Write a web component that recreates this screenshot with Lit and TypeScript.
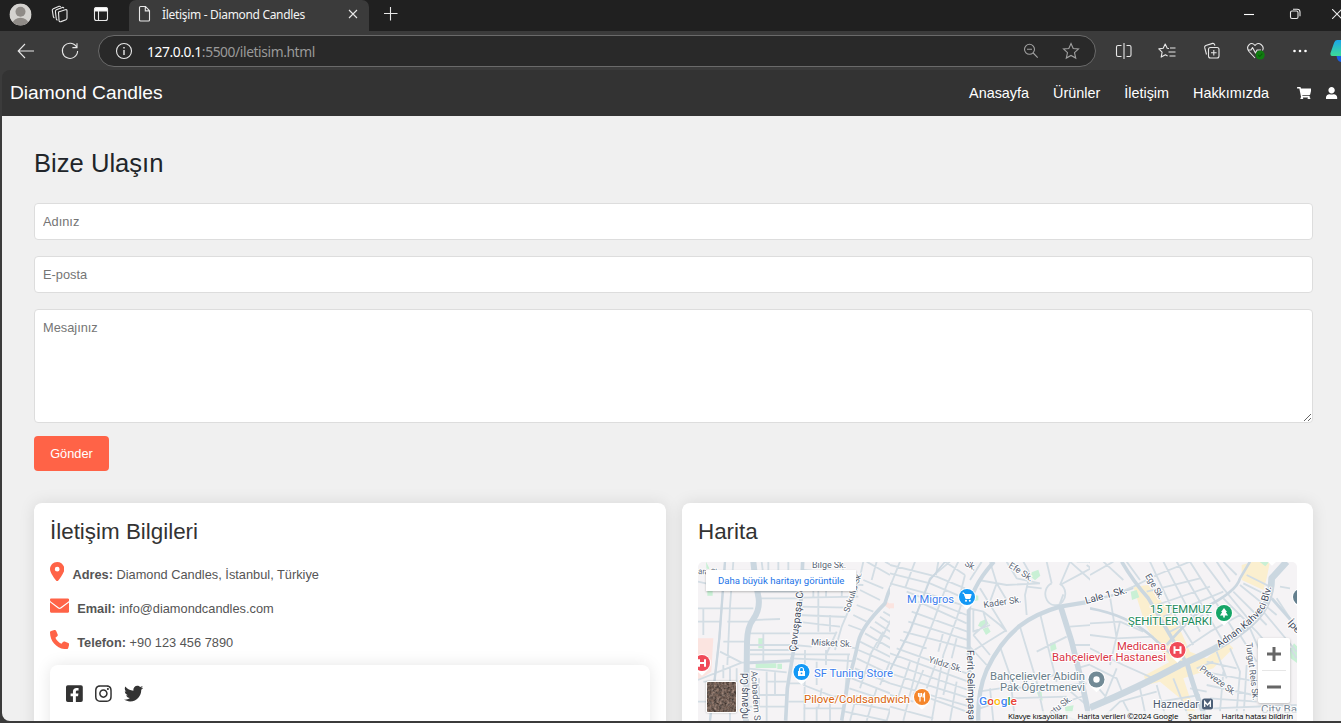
import { LitElement, html, css, svg } from "lit";
import { customElement } from "lit/decorators.js";

const SANS = css`"Liberation Sans", Arial, sans-serif`;

/* Solid glyphs: [viewBox width, path] on a 512 high grid */
const GLYPHS: Record<string, [number, string]> = {
  cart: [576, "M528.12 301.319l47.273-208C578.806 78.301 567.391 64 551.99 64H159.208l-9.166-44.81C147.758 8.021 137.93 0 126.529 0H24C10.745 0 0 10.745 0 24v16c0 13.255 10.745 24 24 24h69.883l70.248 343.435C147.325 417.1 136 435.222 136 456c0 30.928 25.072 56 56 56s56-25.072 56-56c0-15.674-6.447-29.835-16.824-40h209.647C430.447 426.165 424 440.326 424 456c0 30.928 25.072 56 56 56s56-25.072 56-56c0-22.172-12.888-41.332-31.579-50.405l5.517-24.276c3.413-15.018-8.002-29.319-23.403-29.319H218.117l-6.545-32h293.145c11.206 0 20.92-7.754 23.403-18.681z"],
  user: [448, "M224 256c70.7 0 128-57.3 128-128S294.7 0 224 0 96 57.3 96 128s57.3 128 128 128zm89.6 32h-16.7c-22.2 10.2-46.9 16-72.9 16s-50.6-5.8-72.9-16h-16.7C60.2 288 0 348.2 0 422.4V464c0 26.5 21.5 48 48 48h352c26.5 0 48-21.5 48-48v-41.6c0-74.2-60.2-134.4-134.4-134.4z"],
  pin: [384, "M215.7 499.2C267 435 384 279.4 384 192C384 86 298 0 192 0S0 86 0 192c0 87.4 117 243 168.3 307.2c12.3 15.3 35.1 15.3 47.4 0zM192 128a64 64 0 1 1 0 128 64 64 0 1 1 0-128z"],
  mail: [512, "M36 64C14 64 0 78 0 100c0 19 7.100 37 19.200 46.400L236.800 309.600c11.400 8.500 27 8.500 38.400 0L492.800 146.400c12.100-9.100 19.200-27 19.200-46.400c0-22-14-36-36-36H36zM0 170V408c0 24 16 40 40 40H472c24 0 40-16 40-40V170L294.400 335.200c-22.800 17.100-54 17.100-76.800 0L0 170z"],
  phone: [512, "M164.9 24.6c-7.7-18.6-28-28.5-47.4-23.2l-88 24C12.1 30.2 0 46 0 64C0 311.4 200.6 512 448 512c18 0 33.8-12.1 38.6-29.5l24-88c5.3-19.4-4.6-39.7-23.2-47.4l-96-40c-16.3-6.8-35.2-2.1-46.3 11.6L304.7 368C234.3 334.7 177.3 277.7 144 207.3L193.3 167c13.7-11.2 18.4-30 11.6-46.3l-40-96z"],
  facebook: [448, "M400 32H48A48 48 0 0 0 0 80v352a48 48 0 0 0 48 48h137.25V327.69h-63V256h63v-54.64c0-62.15 37-96.48 93.67-96.48 27.14 0 55.52 4.84 55.52 4.84v61h-31.27c-30.81 0-40.42 19.12-40.42 38.73V256h68.78l-11 71.69h-57.78V480H400a48 48 0 0 0 48-48V80a48 48 0 0 0-48-48z"],
  instagram: [448, "M224.1 141c-63.6 0-114.9 51.3-114.9 114.9s51.3 114.9 114.9 114.9S339 319.5 339 255.9 287.7 141 224.1 141zm0 189.6c-41.1 0-74.7-33.5-74.7-74.7s33.5-74.7 74.7-74.7 74.7 33.5 74.7 74.7-33.6 74.7-74.7 74.7zm146.4-194.3c0 14.9-12 26.8-26.8 26.8-14.9 0-26.8-12-26.8-26.8s12-26.8 26.8-26.8 26.8 12 26.8 26.8zm76.1 27.2c-1.7-35.9-9.9-67.7-36.2-93.9-26.2-26.2-58-34.4-93.9-36.2-37-2.1-147.9-2.1-184.9 0-35.8 1.7-67.6 9.9-93.9 36.1s-34.4 58-36.2 93.9c-2.1 37-2.1 147.9 0 184.9 1.7 35.9 9.9 67.7 36.2 93.9s58 34.4 93.9 36.2c37 2.1 147.9 2.1 184.9 0 35.9-1.7 67.7-9.9 93.9-36.2 26.2-26.2 34.4-58 36.2-93.9 2.1-37 2.1-147.8 0-184.8zM398.8 388c-7.8 19.6-22.9 34.7-42.6 42.6-29.5 11.7-99.5 9-132.1 9s-102.7 2.6-132.1-9c-19.6-7.8-34.7-22.9-42.6-42.6-11.7-29.5-9-99.5-9-132.1s-2.6-102.7 9-132.1c7.8-19.6 22.9-34.7 42.6-42.6 29.5-11.7 99.5-9 132.1-9s102.7-2.6 132.1 9c19.6 7.8 34.7 22.9 42.6 42.6 11.7 29.5 9 99.5 9 132.1s2.7 102.7-9 132.1z"],
  twitter: [512, "M459.37 151.716c.325 4.548.325 9.097.325 13.645 0 138.72-105.583 298.558-298.558 298.558-59.452 0-114.68-17.219-161.137-47.106 8.447.974 16.568 1.299 25.34 1.299 49.055 0 94.213-16.568 130.274-44.832-46.132-.975-84.792-31.188-98.112-72.772 6.498.974 12.995 1.624 19.818 1.624 9.421 0 18.843-1.3 27.614-3.573-48.081-9.747-84.143-51.98-84.143-102.985v-1.299c13.969 7.797 30.214 12.67 47.431 13.319-28.264-18.843-46.781-51.005-46.781-87.391 0-19.492 5.197-37.36 14.294-52.954 51.655 63.675 129.3 105.258 216.365 109.807-1.624-7.797-2.599-15.918-2.599-24.04 0-57.828 46.782-104.934 104.934-104.934 30.213 0 57.502 12.67 76.67 33.137 23.715-4.548 46.456-13.32 66.599-25.34-7.798 24.366-24.366 44.833-46.132 57.827 21.117-2.273 41.584-8.122 60.426-16.243-14.292 20.791-32.161 39.308-52.628 54.253z"],
};

const glyph = (name: string, size: number) => {
  const [w, d] = GLYPHS[name];
  return html`<svg viewBox="0 0 ${w} 512" width=${(w / 512) * size} height=${size} fill="currentColor"><path d=${d}></path></svg>`;
};

@customElement("browser-chrome")
class BrowserChrome extends LitElement {
  static styles = css`
    :host { display: block; font-family: "Noto Sans", "Open Sans", sans-serif; color: #fff; }
    svg { display: block; flex: none; fill: none; stroke: #e8e8e8; stroke-width: 1.1; }
    .tabs { display: flex; height: 31px; background: #202020; }
    .left { display: flex; align-items: center; width: 129px; height: 28px; padding-left: 9px; gap: 18px; box-sizing: border-box; background: #202020; }
    .panel { margin-left: 4px; }
    .tab { display: flex; align-items: center; width: 240px; height: 31px; background: #3b3b3b; border-radius: 7px 7px 0 0; padding: 0 9px 3px 8px; box-sizing: border-box; }
    .title { flex: 1; margin-left: 9px; font-size: 12px; letter-spacing: -0.32px; white-space: nowrap; color: #f4f4f4; }
    .plus { margin: 6px 0 0 14px; }
    .controls { display: flex; margin-left: auto; width: 97px; height: 28px; align-items: center; gap: 33px; overflow: hidden; }
    .restore { margin-left: 1px; }
    .close { margin-left: -4px; }
    .bar { display: flex; align-items: center; height: 39px; background: #3b3b3b; overflow: hidden; }
    .back { margin-left: 17px; }
    .reload { margin-left: 26px; }
    .address { display: flex; flex: none; align-items: center; box-sizing: border-box; width: 998px; height: 32px; margin: 1px 0 0 19px; padding: 0 15px 0 16px; border: 1px solid #6a6a6a; border-radius: 16px; background: #292929; }
    .url { flex: 1; margin-left: 14px; font-size: 13.8px; letter-spacing: -0.4px; color: #9a9a9a; white-space: nowrap; }
    .url b { font-weight: 400; color: #fff; }
    .address .dim { stroke: #a0a0a0; }
    .star { margin-left: 23px; }
    .tools { display: flex; flex: none; align-items: center; gap: 24px; margin-left: 19px; }
    .favs { margin-left: 1px; }
    .pilot { margin-left: -5px; }
  `;

  render() {
    return html`
      <div class="tabs">
        <div class="left">
          <svg width="23" height="23" viewBox="0 0 23 23">
            <defs><clipPath id="face"><circle cx="11.5" cy="11.5" r="11"></circle></clipPath></defs>
            <g stroke="none" clip-path="url(#face)"><circle cx="11.5" cy="11.5" r="11.2" fill="#d4d2cf"></circle><circle cx="11.5" cy="8.8" r="5" fill="#8f8b87"></circle><ellipse cx="11.5" cy="20.5" rx="7.8" ry="5.7" fill="#8f8b87"></ellipse></g>
          </svg>
          <svg width="20" height="20" viewBox="0 0 20 20">
            <path d="M8.5 8.1l6.8-2.4q1.7-.4 1.7 1.2v7.2q0 1.2-1 1.6l-5 1.9q-2 .5-2-1.4z"></path>
            <path d="M6.2 14.2l-.8-6.6q-.1-1.3 1-1.8l6-2.4q1-.3 1.5.8M3.3 12.3l-1-5.8q-.2-1.2 1-1.7l5.8-2.5q1-.3 1.6.6M6.2 14.4q.2 1.4 1.3 1.8M3.3 12.4q.2 1.1 1.1 1.5"></path>
          </svg>
          <svg class="panel" width="18" height="18" viewBox="0 0 18 18">
            <rect x="2.5" y="2.5" width="13" height="13" rx="2"></rect><path d="M2.5 6V4.5a2 2 0 0 1 2-2h9a2 2 0 0 1 2 2V6z" fill="#fff"></path><path d="M6.5 6v9.5"></path>
          </svg>
        </div>
        <div class="tab">
          <svg width="16" height="18" viewBox="0 0 16 18"><path d="M3.5 1.5h5l4 4.2v9.3q0 1-1 1h-8q-1 0-1-1v-12.5q0-1 1-1zM8.3 1.7v4.2h4.2"></path></svg>
          <span class="title">İletişim - Diamond Candles</span>
          <svg width="14" height="14" viewBox="0 0 14 14"><path d="M3 3l8 8M11 3l-8 8"></path></svg>
        </div>
        <svg class="plus" width="16" height="16" viewBox="0 0 16 16"><path d="M7.5 1v13.5M1 7.5h13.5"></path></svg>
        <div class="controls">
          <svg width="10" height="10" viewBox="0 0 10 10"><path d="M0 5.5h10" stroke="#fff"></path></svg>
          <svg class="restore" width="15" height="12" viewBox="0 0 15 12"><rect x="2.5" y="3" width="7.5" height="7.5" rx="1.5"></rect><path d="M5 1.2h4.2q2.8 0 2.8 2.8v4.2"></path></svg>
          <svg class="close" width="10" height="10" viewBox="0 0 10 10"><path d="M0 0l10 10M10 0L0 10"></path></svg>
        </div>
      </div>
      <div class="bar">
        <svg class="back" width="18" height="18" viewBox="0 0 18 18"><path d="M17 9H1.4M8 2L1.2 9 8 16"></path></svg>
        <svg class="reload" width="18" height="18" viewBox="0 0 18 18"><path d="M15.7 5.2A7.6 7.6 0 1 0 16.6 9M16 1.2v4.4h-4.6"></path></svg>
        <div class="address">
          <svg width="18" height="18" viewBox="0 0 18 18"><circle cx="9" cy="9" r="7.5"></circle><path d="M9 8v5M9 5v1.4" stroke-width="1.4"></path></svg>
          <span class="url"><b>127.0.0.1</b>:5500/iletisim.html</span>
          <svg class="dim" width="16" height="16" viewBox="0 0 16 16"><circle cx="6.5" cy="6.3" r="5"></circle><path d="M10.2 10l4.5 4.7M4 6.3h5"></path></svg>
          <svg class="dim star" width="18" height="18" viewBox="0 0 18 18"><path d="M9 1.5l2.2 5 5.3.5-4 3.7 1.2 5.4L9 13.4l-4.7 2.7 1.2-5.4-4-3.7 5.3-.5z"></path></svg>
        </div>
        <div class="tools">
          <svg width="18" height="18" viewBox="0 0 18 18"><path d="M9 1v16M6.5 3.5h-3.500q-1.500 0-1.500 1.500v8q0 1.500 1.500 1.500h3.500M11.500 3.500h3q1.500 0 1.500 1.500v8q0 1.500-1.500 1.500h-3"></path></svg>
          <svg class="favs" width="20" height="18" viewBox="0 0 20 18"><path d="M11 6.500l-1.800-.2L7.200 2 5.200 6.300l-4.400.6 3.300 3.200-.9 5 4.200-2.300 2.200 1.200M12 6h5.500M10.500 10h7M11.500 14h6" stroke-linejoin="round"></path></svg>
          <svg width="20" height="20" viewBox="0 0 20 20"><rect x="6.500" y="6.500" width="10.500" height="10.500" rx="2"></rect><path d="M11.800 9v5.600M9 11.800h5.600M4.500 13.500L2.700 6.700q-.4-1.700 1.100-2.300l6.800-2q1.500-.3 2 1.200l.3 1"></path></svg>
          <svg width="20" height="20" viewBox="0 0 20 20"><path d="M9 17L3 10.500C-1 5 5.500-.5 9 4.500c3.500-5 10 .5 7.500 5M2 9h3l1.500-2.500 3 5.500L11 9h4" stroke-linejoin="round"></path><circle cx="14.200" cy="14" r="4.500" fill="#107c10" stroke="none"></circle><path d="M12.200 14l1.500 1.500 2.600-2.800" stroke="#0a5c0a"></path></svg>
          <svg width="20" height="20" viewBox="0 0 20 20"><g fill="#fff" stroke="none"><circle cx="4.500" cy="10" r="1.300"></circle><circle cx="10" cy="10" r="1.300"></circle><circle cx="15.500" cy="10" r="1.300"></circle></g></svg>
          <svg class="pilot" width="24" height="24" viewBox="0 0 24 24"><defs><linearGradient id="cp" x1="0" y1="0" x2="0" y2="1"><stop offset="0" stop-color="#1aa5ea"></stop><stop offset="1" stop-color="#3ddc97"></stop></linearGradient></defs><g stroke="none"><path d="M7 15h8v8h-2q-4 0-5-4z" fill="#1a5fe0"></path><path d="M8 1h12v16H3q-2 0-1.500-3L5 4q1-3 3-3z" fill="url(#cp)"></path></g></svg>
        </div>
      </div>
    `;
  }
}

@customElement("site-header")
class SiteHeader extends LitElement {
  static styles = css`
    :host { display: flex; align-items: center; box-sizing: border-box; height: 46px; padding-left: 8px; background: #333; color: #fff; font-family: ${SANS}; overflow: hidden; }
    .brand { font-size: 19.2px; line-height: 24px; }
    nav { display: flex; flex: none; align-items: center; gap: 24px; margin-left: auto; font-size: 14.4px; line-height: 18px; }
    .icons { display: flex; gap: 15px; margin-left: 4px; width: 44px; overflow: hidden; }
    svg { display: block; flex: none; }
  `;
  render() {
    return html`
      <div class="brand">Diamond Candles</div>
      <nav>
        <span>Anasayfa</span><span>Ürünler</span><span>İletişim</span><span>Hakkımızda</span>
        <div class="icons">${glyph("cart", 12.8)} ${glyph("user", 12.8)}</div>
      </nav>
    `;
  }
}

/* Street network, three panels drawn on a triple-resolution grid */
const PANELS = [
  {
    x: 690,
    blocks: [
      ["#fbe4e0", "M24 250h46l-6 100-40 25zM590 140l25 15-8 12-22-14z"],
      ["#c9f0d5", "M205 250h14v30h-14zM197 325h62v14h-62zM48 20l10 20-8 10zM52 108h16v14H52zM262 326h14v16h-14z"],
    ],
    minor: "M105 20L88 250 60 497M24 160H190M24 200H90M40 160V240M24 80L90 95M130 20L120 155 112 330M112 200H180M100 260H170M24 375L155 323 310 317M155 323L90 290M100 330V370M180 235H300M215 20L220 60M205 110H330M210 130H335M235 20V110M265 20V110M295 20V110M190 195L270 192M220 235V318M180 270H300M180 285H300M180 298H480M170 340L290 352M190 420H290M230 380H290M230 350V497M255 352V420M178 455H290M207 370V455M120 340V497M24 440H120M140 340V380M75 380H40M340 45L500 60M340 85L520 90M338 128L505 125M330 155L470 158M325 180L470 186M320 200L450 215M315 235H440M310 270L365 275M485 278L500 280M300 310L490 318M345 285L343 497M380 320V390M408 285V330M440 230L408 300M475 300L465 420M340 390L430 425 470 420M300 385H340M295 440H345M340 460H460M380 455V497M420 440V497M395 400L385 460M520 20L500 110 455 215 435 285M410 20L408 125M370 45V125M460 20L455 125M385 85V230M420 180V230M520 75L580 100M510 105L570 135M500 150L550 170M490 180L530 200M475 210L515 225M530 20L600 60M560 20L545 75M585 20L620 40M580 170L630 200M570 185L630 225M555 200L630 250M540 215L630 270M525 235L630 295M510 260L630 320M505 285L600 325M500 310L630 372M495 340L600 385M485 370L600 415M478 400L600 440M470 440L600 465M465 470L590 497M610 180L560 280M580 230L540 300M600 320L570 390M545 290L510 400M560 400L530 497M500 420L480 497M620 400L590 497",
    major: [
      ["M190 20Q196 80 206 130 210 165 190 192 172 215 171 260L168 497", 18],
      ["M338 20L333 140 310 290 292 400 287 497", 11],
      ["M630 50Q600 90 585 145 515 215 505 260 490 330 475 375L455 497", 11],
      ["M105 20L88 250 60 497", 7],
      ["M168 324L300 317", 9],
    ],
  },
  {
    x: 890,
    blocks: [
      ["#c9f0d5", "M270 200l18-8 8 14-18 14-14-8zM278 222l16-6 8 14-14 10zM425 52l20-8 6 18-16 14-12-10zM480 265l15-5 5 22-18 8zM440 385l14 20 4 32-12-10-10-30zM525 455l26-4-4 20-20 5zM255 120l10 2v14l-10 2z"],
      ["#fbe4e0", "M0 145h12v15H0z"],
    ],
    minor: "M180 20L120 70 60 230 0 345M30 20L0 95M75 20L45 100M145 20L138 60M205 20L170 90 130 200 90 300 40 497M225 115L200 190 160 300 125 497M225 60L210 120M0 30L140 65 225 100M0 55L120 85 225 130M0 85L110 115 230 155M50 110L230 180M85 140L230 205M65 170L232 230M55 200L232 255M40 230L232 280M30 255L110 280M20 280L230 355M0 295L235 380M0 325L235 405M0 355L240 430M0 385L240 455M0 420L70 440M120 430L245 475M0 455L130 490M165 20L225 60M160 230L145 290M200 250L185 310M60 320L20 440M100 345L70 420M180 330L160 420M200 380L180 497M140 320L110 400M275 20L240 75M265 75L350 90 450 85M300 20L320 85 300 140M320 85L350 135M350 20L380 70 450 85M400 20L420 55 405 120 410 180M470 20L485 85M540 20L510 90M540 20L630 100M510 90L575 55 630 25M485 85A30 34 0 1 0 512 88M510 145L520 118M560 20L600 20 630 80M455 100L410 95M240 160L280 170 330 210 350 230M250 165L250 230 300 210M280 170L290 205 250 240M250 240L300 300M245 290L310 250 350 225M235 270L290 330M270 100L350 230M390 215L440 380 465 497M450 175L480 300 500 380M440 290L530 245M540 215L630 208M550 270L630 270M420 370L500 360M440 400L590 385M330 275L360 360 375 497M265 410L330 400 470 395M270 460L330 440M300 400L310 497M350 430L530 425M470 497L530 440 590 420M560 340L630 320M590 30L630 60M530 400L590 450M490 470L560 497",
    major: [
      ["M312 20Q240 100 236 170L236 290 245 497", 12],
      ["M265 497Q262 410 290 345 330 260 390 212 440 175 510 155L630 135", 13],
      ["M512 155L545 260 575 380 600 497", 17],
      ["M165 20L120 75 60 225 0 345", 5],
    ],
  },
  {
    x: 1090,
    blocks: [
      ["#fbefcf", "M130 95l45-5 80 100 45 100 50 20 60-50 20 20-60 60-90 30 30 90 40 60h-30l-50-90-60-50-40 10-8-28 75-40-70-110zM455 30l35-10h50l-10 50-10 35-65-30z"],
      ["#c9f0d5", "M122 110l18-5 8 22-22 8zM600 285l12-20 10 10v50l-20-15zM508 20h30l-12 14z"],
    ],
    minor: "M0 60L70 20M40 20L100 75M0 135L60 125 130 95 200 60 300 20M110 20L150 75M0 205L90 200 160 230M0 240L80 250 190 245M60 125L80 250M0 280L100 330 190 370M90 200L60 330M0 330L80 370 100 420M0 370L60 440M40 440L80 340M100 420L200 370M30 497L90 440 200 410M150 400L170 497M200 390L230 497M100 440L130 497M180 20L260 190 310 270M220 20L330 230M260 20L400 260M300 20L440 240M340 20L400 100 490 210M380 20L420 80M170 110L330 70M200 150L360 95M220 185L400 110M240 230L340 180M270 290L360 230 450 180M400 130L500 230 560 300M450 90L560 180M430 110L530 210M400 20L440 60M470 60L540 95M460 85L530 120M420 280L450 350 440 470M380 290L410 370M350 320L440 340M340 350L500 380M350 390L490 420M400 350L390 470M450 240L500 320M480 220L510 290M360 430L500 440M370 460L620 450M470 330L460 497M560 130L620 220M570 95L600 100M520 170L620 290M600 280L620 310M610 450L590 497M320 340L370 320M300 400L350 410M250 370L300 497M210 440L330 420",
    major: [
      ["M95 20Q130 80 175 130L240 240 290 325", 11],
      ["M0 135Q80 120 130 100", 5],
      ["M0 160Q110 180 180 240L280 330", 8],
      ["M0 458Q140 400 270 330 340 300 390 272 480 220 515 170 545 125 545 70L590 20", 20],
      ["M290 320Q310 400 350 497", 15],
      ["M230 270Q300 190 340 160 440 110 450 70L480 20", 8],
      ["M545 130L620 215", 9],
    ],
  },
];

type Label = [string, number, number, number, string, string?, number?, number?];
/* text, x, y, size, colour, anchor, angle, drawn width */
const LABELS: Label[] = [
  ["Bilge Sk.", 812, 567.5, 8.5, "#5b6676", "start", 0, 34],
  ["ara Sk.", 698, 574, 8.5, "#5b6676", "start", 3, 23],
  ["Sokullu Sk.", 849, 613, 8.5, "#5b6676", "start", -72, 42],
  ["Çavuşpaşa Cd", 796, 652, 10, "#3f4b5e", "start", -83, 66],
  ["Misket Sk.", 811, 645, 9, "#5b6676", "start", 3, 41],
  ["Acıbadem Sok", 751, 671, 9, "#5b6676", "start", 86, 60],
  ["nÇavuş Cd", 748, 719, 10, "#3f4b5e", "start", -90, 46],
  ["SF Tuning Store", 814, 677, 11, "#3b7ded", "start", 0, 79],
  ["Pilove/Coldsandwich", 804, 703, 11, "#d9640d", "start", 0, 106],
  ["M Migros", 907, 603, 11, "#3b7ded", "start", 0, 47],
  ["Sk.", 964, 565, 9, "#5b6676", "start", 30, 12],
  ["Efe Sk.", 1008, 567, 9, "#5b6676", "start", 33, 27],
  ["Kader Sk.", 984, 608, 9, "#5b6676", "start", -9, 38],
  ["Yıldız Sk.", 928, 662, 9, "#5b6676", "start", 17, 35],
  ["Ferit Selimpaşa", 967, 650, 10, "#3f4b5e", "start", 89, 70],
  ["Lale 1 Sk.", 1086, 604, 10, "#3f4b5e", "start", -15, 43],
  ["Ege Sk.", 1145, 576, 9, "#5b6676", "start", 59, 28],
  ["15 TEMMUZ", 1212, 613, 10.5, "#1b8a5a", "end", 0, 62],
  ["ŞEHİTLER PARKI", 1212, 624.5, 10.5, "#1b8a5a", "end", 0, 84],
  ["Medicana", 1166, 650, 11, "#d93445", "end", 0, 49],
  ["Bahçelievler Hastanesi", 1166, 661, 11, "#d93445", "end", 0, 114],
  ["Bahçelievler Abidin", 1085, 680, 11, "#697d89", "end", 0, 95],
  ["Pak Öğretmenevi", 1085, 691, 11, "#697d89", "end", 0, 85],
  ["Adnan Kahveci", 1219, 648, 10, "#3f4b5e", "start", -36, 30],
  ["Turgut Reis Sk.", 1246, 643, 9, "#5b6676", "start", 83, 58],
  ["Preveze Sk.", 1199, 670, 9, "#5b6676", "start", 37, 43],
  ["İpek", 1287, 623, 9.5, "#3f4b5e", "start", 48, 20],
  ["Haznedar", 1153, 708, 10.5, "#4c5a6e", "start", 0, 46],
  ["City Ba", 1261, 713, 10.5, "#7c8b99", "start", 0, 36],
  ["ntu Sk.", 1052, 716, 9, "#5b6676", "start", -38, 26],
];

@customElement("street-map")
class StreetMap extends LitElement {
  static styles = css`
    :host { display: block; position: relative; height: 159px; border-radius: 5px 5px 0 0; overflow: hidden; background: #f5f3f5; }
    .canvas { display: block; font-family: Roboto, sans-serif; }
    .halo { paint-order: stroke; stroke: #fff; stroke-width: 2px; stroke-linejoin: round; }
    .bigger { position: absolute; left: 8px; top: 8px; box-sizing: border-box; width: 150px; height: 21px; padding-left: 12px; background: #fff; box-shadow: 0 1px 2px rgba(0, 0, 0, 0.25); color: #1a73e8; font: 9.6px/21px Roboto, sans-serif; white-space: nowrap; }
    .zoom { position: absolute; left: 560px; top: 76px; width: 32px; height: 65px; border-radius: 2px; background: #fff; box-shadow: 0 1px 3px rgba(0, 0, 0, 0.25); display: flex; flex-direction: column; align-items: center; justify-content: space-evenly; }
    .zoom svg { display: block; fill: #666; }
    .zoom i { width: 24px; height: 1px; background: #e6e6e6; }
    .credits { position: absolute; right: 0; bottom: 0; display: flex; gap: 10px; height: 10px; padding: 0 4px 0 3px; font: 8px/10px "Open Sans", sans-serif; letter-spacing: -0.19px; color: #000; background: rgba(245, 245, 245, 0.75); white-space: nowrap; }
    .thumb { position: absolute; left: 8px; top: 119px; width: 29px; height: 30px; border: 1px solid #fff; border-radius: 2px; overflow: hidden; box-shadow: 0 0 2px rgba(0, 0, 0, 0.3); }
    .thumb svg { display: block; }
  `;

  private marker(x: number, y: number, colour: string, inner: unknown) {
    return svg`<g transform="translate(${x} ${y})"><path d="M-6.5 6.5L0 12.8 6.5 6.5z" fill="#fff"></path><circle r="9" fill="#fff"></circle><circle r="8" fill=${colour}></circle>${inner}</g>`;
  }

  render() {
    const letterH = svg`<path d="M-3-3.8V3.8M3-3.8V3.8M-3 0H3" stroke="#fff" stroke-width="2"></path>`;
    return html`
      <svg class="canvas" width="599" height="159" viewBox="698 562 599 159">
        <defs>
          ${PANELS.map((p, i) => svg`<clipPath id=${"p" + i}><rect x="0" y="0" width=${i < 2 ? 600 : 640} height="510"></rect></clipPath>`)}
          <path id="boulevard" d="M1219 648Q1258 622 1266 606 1270 596 1272 583"></path>
        </defs>
        ${PANELS.map((p, i) => svg`<g transform="translate(${p.x} 555) scale(.33333)" clip-path=${`url(#p${i})`} fill="none" stroke="#d3dde4" stroke-linejoin="round">
          ${p.blocks.map(([c, d]) => svg`<path d=${d} fill=${c} stroke="none"></path>`)}
          <path d=${p.minor} stroke-width="5.5"></path>
          ${p.major.map(([d, w]) => svg`<path d=${d} stroke="#cbd7e0" stroke-width=${w}></path>`)}
        </g>`)}
        ${LABELS.filter((l) => l[0] !== "Adnan Kahveci").map(([t, x, y, s, c, a, r, w]) => svg`<text class="halo" transform="translate(${x} ${y}) rotate(${r ?? 0})" font-size=${s} fill=${c} text-anchor=${a ?? "start"} textLength=${w ?? 40} lengthAdjust="spacingAndGlyphs">${t}</text>`)}
        <text class="halo" font-size="10" fill="#3f4b5e" letter-spacing="-.05"><textPath href="#boulevard">Adnan Kahveci Blv.</textPath></text>
        ${this.marker(702, 663, "#f04a58", letterH)}
        ${this.marker(1177.5, 650, "#f04a58", letterH)}
        ${this.marker(801.5, 672, "#1398f5", svg`<path d="M-3.5-1h7v5h-7z" fill="#fff"></path><path d="M-2-1V-2.5a2 2 0 0 1 4 0V-1" fill="none" stroke="#fff" stroke-width="1.2"></path><circle cy="1.3" r=".9" fill="#1398f5"></circle>`)}
        ${this.marker(967, 597, "#1398f5", svg`<path d="M-4.5-4H-3L-1.200 1.500H3L4.200-2.500H-2.400" fill="#fff" stroke="#fff"></path><circle cx="-1" cy="3.7" r="1" fill="#fff"></circle><circle cx="2.8" cy="3.7" r="1" fill="#fff"></circle>`)}
        ${this.marker(922, 697, "#f5862b", svg`<path d="M-3.5-4v2.500q0 1.500 1.500 1.500T-.5-1.500V-4M-2-4V4.500M2.500 4.500V-4Q1-3 1 0h1.500" fill="none" stroke="#fff" stroke-width="1.2"></path>`)}
        ${this.marker(1224, 613, "#16a567", svg`<path d="M0-5L3-1H1.800L4 2.500H.8V4.500H-.8V2.500H-4L-1.800-1H-3z" fill="#fff"></path>`)}
        ${this.marker(1096.5, 679.5, "#728a96", svg`<circle r="3.2" fill="#fff"></circle>`)}
        ${this.marker(1301, 597, "#647f8e", svg``)}
        ${this.marker(1272, 553, "#9aa7ae", svg``)}
        <rect x="1202" y="698.5" width="11" height="11" rx="2.5" fill="#4c5f77"></rect>
        <path d="M1204.700 707v-5.500l2.800 3.500 2.800-3.500v5.500" fill="none" stroke="#fff" stroke-width="1.3"></path>
        <text class="halo" x="979" y="705" font-size="11" font-weight="500" textLength="38" lengthAdjust="spacingAndGlyphs"><tspan fill="#4285f4">G</tspan><tspan fill="#ea4335">o</tspan><tspan fill="#fbbc04">o</tspan><tspan fill="#4285f4">g</tspan><tspan fill="#34a853">l</tspan><tspan fill="#ea4335">e</tspan></text>
      </svg>
      <div class="bigger">Daha büyük haritayı görüntüle</div>
      <div class="thumb">
        <svg width="29" height="30" viewBox="0 0 29 30">
          <defs><filter id="ground" color-interpolation-filters="sRGB"><feTurbulence type="fractalNoise" baseFrequency=".4" numOctaves="3" seed="4"></feTurbulence><feColorMatrix values=".5 .3 0 0 .04  .4 .3 0 0 .02  .35 .3 0 0 .01  0 0 0 0 1"></feColorMatrix></filter></defs>
          <rect width="29" height="30" filter="url(#ground)"></rect>
        </svg>
      </div>
      <div class="zoom">
        <svg width="14" height="14" viewBox="0 0 14 14"><path d="M5.500 0h3v5.500H14v3H8.500V14h-3V8.500H0v-3h5.500z"></path></svg>
        <i></i>
        <svg width="14" height="14" viewBox="0 0 14 14"><path d="M0 5.500h14v3H0z"></path></svg>
      </div>
      <div class="credits"><span>Klavye kısayolları</span><span>Harita verileri ©2024 Google</span><span>Şartlar</span><span>Harita hatası bildirin</span></div>
    `;
  }
}

@customElement("contact-page")
class ContactPage extends LitElement {
  static styles = css`
    :host { display: block; font-family: ${SANS}; color: #212529; background: #f0f0f0; padding: 32px 28px 0 32px; box-sizing: border-box; height: 605px; overflow: hidden; }
    h1 { margin: 0 0 24px; font-size: 25.6px; font-weight: 400; line-height: 31px; }
    input, textarea { display: block; width: 100%; box-sizing: border-box; margin: 0 0 16px; padding: 8px; border: 1px solid #ddd; border-radius: 4px; background: #fff; font: 12.8px/19px ${SANS}; }
    input { height: 37px; }
    textarea { height: 114px; margin-bottom: 13px; }
    ::placeholder { color: #757575; opacity: 1; }
    button { display: block; width: 75px; height: 35px; padding: 0; border: 0; border-radius: 4px; background: #ff6347; color: #fff; font: 12.8px/19px ${SANS}; }
    .columns { display: grid; grid-template-columns: 632px 631px; gap: 16px; margin-top: 32px; }
    .card { box-sizing: border-box; height: 300px; padding: 16px; border-radius: 8px; background: #fff; box-shadow: 0 0 16px rgba(0, 0, 0, 0.1); }
    h2 { margin: -1px 0 17px; font-size: 22.4px; font-weight: 400; line-height: 27px; color: #333; }
    .row { display: flex; height: 19px; margin-bottom: 15px; font-size: 12.8px; line-height: 25px; color: #555; white-space: pre; }
    .row svg { display: block; flex: none; margin-right: 8px; color: #ff6347; }
    .social { display: flex; gap: 12px; height: 80px; box-sizing: border-box; margin-top: 16px; padding: 19px 16px; border-radius: 8px; background: #fff; box-shadow: 0 0 16px rgba(0, 0, 0, 0.1); color: #333; }
    .social svg { display: block; }
    street-map { width: 599px; }
  `;
  render() {
    return html`
      <h1>Bize Ulaşın</h1>
      <input placeholder="Adınız" />
      <input placeholder="E-posta" />
      <textarea placeholder="Mesajınız"></textarea>
      <button>Gönder</button>
      <div class="columns">
        <section class="card">
          <h2>İletişim Bilgileri</h2>
          <div class="row">${glyph("pin", 19.2)}<b>Adres:</b> Diamond Candles, İstanbul, Türkiye</div>
          <div class="row">${glyph("mail", 19.2)}<b>Email:</b> info@diamondcandles.com</div>
          <div class="row">${glyph("phone", 19.2)}<b>Telefon:</b> +90 123 456 7890</div>
          <div class="social">${glyph("facebook", 19.2)}${glyph("instagram", 19.2)}${glyph("twitter", 19.2)}</div>
        </section>
        <section class="card">
          <h2>Harita</h2>
          <street-map></street-map>
        </section>
      </div>
    `;
  }
}

@customElement("app-root")
class AppRoot extends LitElement {
  static styles = css`
    :host { display: block; width: 1341px; height: 723px; overflow: hidden; background: #3b3b3b; }
    .view { margin-left: 2px; height: 651px; border-radius: 8px 0 0 8px; overflow: hidden; }
  `;
  render() {
    return html`<browser-chrome></browser-chrome>
      <div class="view"><site-header></site-header><contact-page></contact-page></div>`;
  }
}
